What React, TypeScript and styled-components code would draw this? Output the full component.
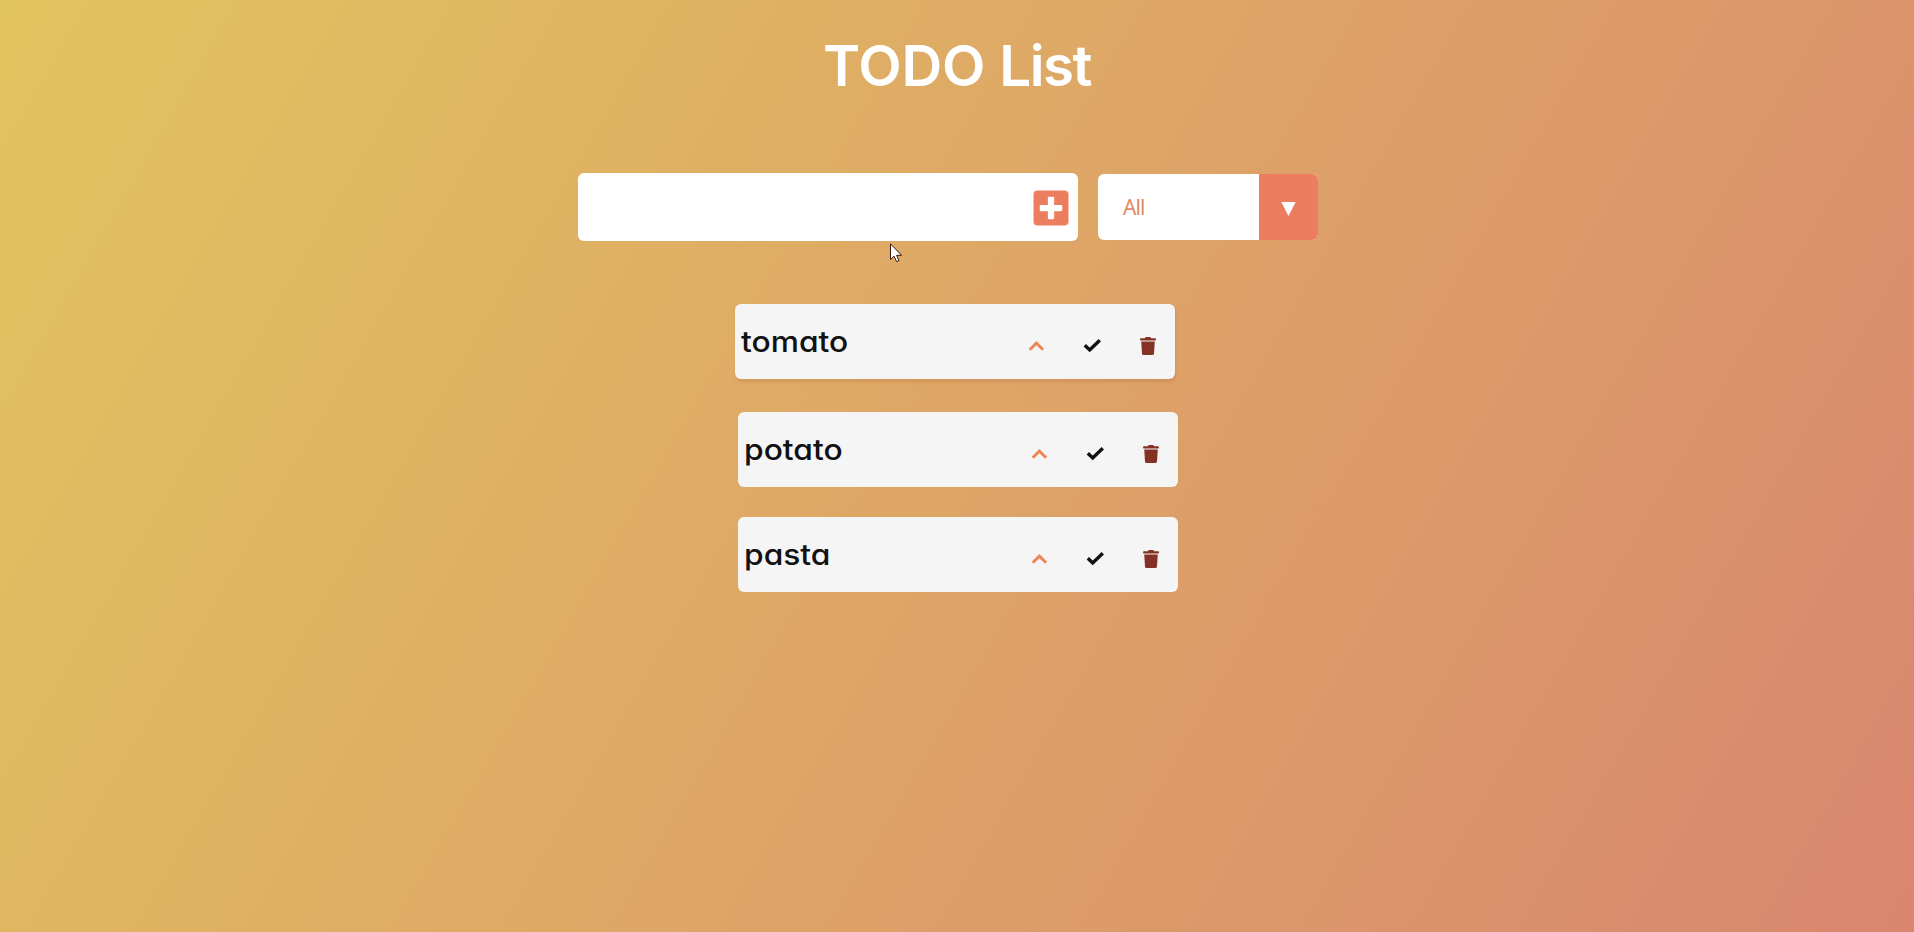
import React from "react";
import styled, { createGlobalStyle, css } from "styled-components";
import { FaPlusSquare, FaTrash } from "react-icons/fa";

const GlobalStyle = createGlobalStyle`
  * { box-sizing: border-box; }
  body {
    margin: 0;
    min-height: 100vh;
    overflow: hidden;
    background: linear-gradient(120deg, #e2c45e, #d9866f);
    font-family: Inter, "Liberation Sans", sans-serif;
    font-feature-settings: "cv11";
  }
`;

const Page = styled.main`
  position: relative;
  min-height: 100vh;
`;

const Header = styled.header`
  display: flex;
  justify-content: center;
  height: 173px;
  padding-top: 31px;
`;

const Title = styled.h1`
  margin: 0;
  color: #fff;
  font-size: 56.5px;
  font-weight: 560;
  line-height: 70px;
  letter-spacing: -0.2px;
  white-space: nowrap;
`;

const TitleWord = styled.span`
  letter-spacing: -1.5px;
`;

const Form = styled.form`
  display: flex;
  align-items: center;
  gap: 20px;
  width: 740px;
  height: 68px;
  margin-left: 578px;
`;

const Entry = styled.div`
  display: flex;
  align-items: center;
  justify-content: flex-end;
  width: 500px;
  height: 68px;
  padding-right: 7px;
  border-radius: 6px;
  background: #fff;
`;

const AddButton = styled.button`
  display: flex;
  padding: 2px 0 0;
  border: 0;
  background: none;
  color: #ed7d5f;
  font-size: 40px;
`;

const Select = styled.div`
  display: flex;
  align-items: stretch;
  width: 220px;
  height: 66px;
  border-radius: 6px;
  overflow: hidden;
  background: #fff;
`;

const SelectValue = styled.span`
  flex: 1;
  padding-left: 25px;
  color: #dc8d65;
  font: 21px/67px "Noto Sans", sans-serif;
  letter-spacing: -0.9px;
`;

const SelectArrow = styled.span`
  display: flex;
  align-items: center;
  justify-content: center;
  width: 59px;
  padding-top: 4px;
  background: #ed7d5f;
`;

const List = styled.ul`
  display: flex;
  flex-direction: column;
  gap: 30px;
  width: 440px;
  margin: 66px 0 0 738px;
  padding: 0;
  list-style: none;
`;

const Item = styled.li<{ $raised?: boolean }>`
  display: flex;
  align-items: center;
  justify-content: space-between;
  height: 75px;
  padding: 0 18px 0 6px;
  border-radius: 6px;
  background: #f5f5f5;
  ${(p) =>
    p.$raised &&
    css`
      transform: translate(-3px, -3px);
      box-shadow: 1px 3px 3px rgba(180, 90, 50, 0.22);
    `}
`;

const ItemText = styled.span`
  color: #111;
  font-size: 29px;
  font-weight: 500;
  transform: scaleX(1.095);
  transform-origin: left;
`;

const Actions = styled.div`
  display: flex;
  align-items: center;
  gap: 38px;
  padding-top: 8px;
`;

const IconButton = styled.button<{ $color: string }>`
  display: flex;
  align-items: center;
  justify-content: center;
  width: 18px;
  height: 18px;
  padding: 0;
  border: 0;
  background: none;
  color: ${(p) => p.$color};
  font-size: 18px;
`;

const Pointer = styled.svg`
  position: absolute;
  left: 890px;
  top: 243px;
`;

const StrokeIcon = ({ points, width }: { points: string; width: number }) => (
  <svg width="18" height="18" viewBox="0 0 18 18" fill="none">
    <polyline points={points} stroke="currentColor" strokeWidth={width} />
  </svg>
);

const todos = [
  { text: "tomato", raised: true },
  { text: "potato", raised: false },
  { text: "pasta", raised: false },
];

export default function App() {
  return (
    <Page>
      <GlobalStyle />
      <Header>
        <Title>
          TODO <TitleWord>List</TitleWord>
        </Title>
      </Header>
      <Form>
        <Entry>
          <AddButton type="button" aria-label="Add">
            <FaPlusSquare />
          </AddButton>
        </Entry>
        <Select>
          <SelectValue>All</SelectValue>
          <SelectArrow>
            <svg width="15" height="14" viewBox="0 0 15 14">
              <path d="M0.3 0H14.7L7.5 14Z" fill="#fff" />
            </svg>
          </SelectArrow>
        </Select>
      </Form>
      <List>
        {todos.map((t) => (
          <Item key={t.text} $raised={t.raised}>
            <ItemText>{t.text}</ItemText>
            <Actions>
              <IconButton $color="#ed8556" aria-label="Raise">
                <StrokeIcon points="2.7,12.8 9.4,6.1 16.1,12.8" width={2.9} />
              </IconButton>
              <IconButton $color="#111" aria-label="Complete">
                <StrokeIcon points="1.8,8.3 6.7,13 16.8,3.3" width={3.4} />
              </IconButton>
              <IconButton $color="#843226" aria-label="Delete">
                <FaTrash />
              </IconButton>
            </Actions>
          </Item>
        ))}
      </List>
      <Pointer width="13" height="20" viewBox="0 0 13 20">
        <path
          d="M0.5 0.8V16.5L4 13.2L6.6 18.6L9 17.6L6.6 12.3H11.6Z"
          fill="#fff"
          stroke="#3a1712"
        />
      </Pointer>
    </Page>
  );
}
